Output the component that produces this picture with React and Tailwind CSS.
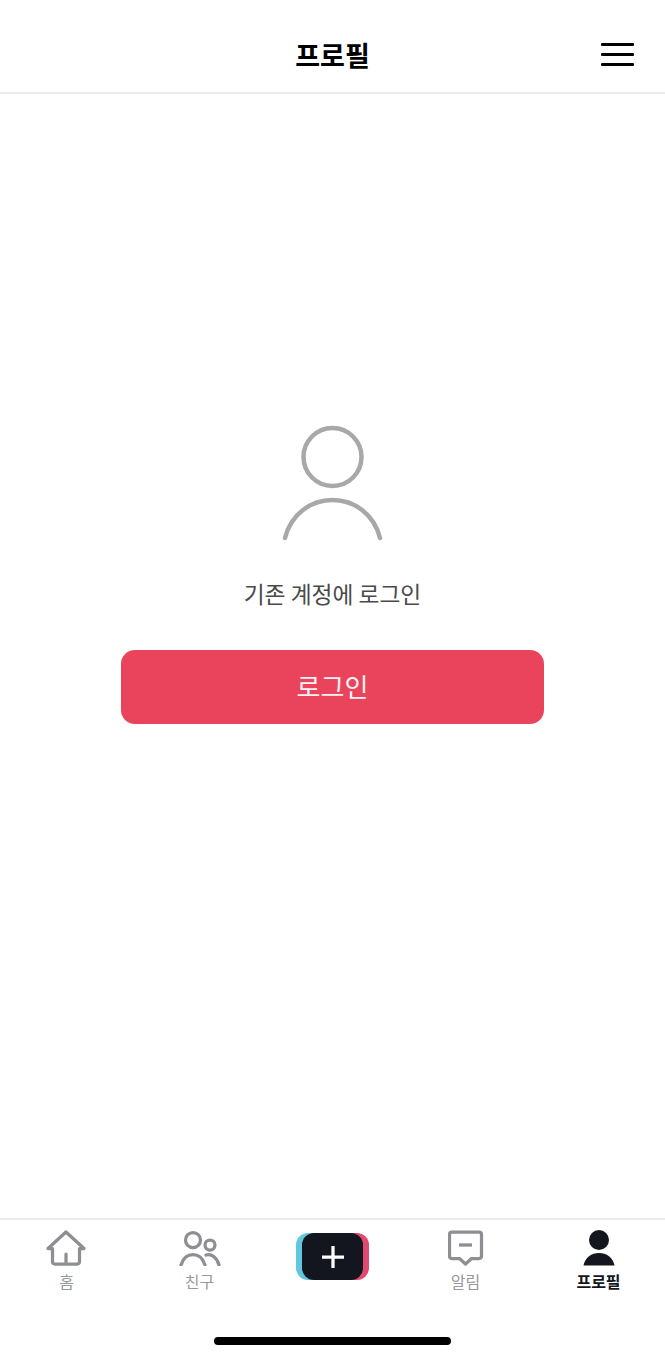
const navItems = [
  { label: '홈', icon: HomeIcon },
  { label: '친구', icon: FriendsIcon },
  { label: null },
  { label: '알림', icon: AlertIcon },
  { label: '프로필', icon: ProfileIcon, active: true },
];

function HomeIcon() {
  return (
    <svg width="40" height="36" viewBox="0 0 40 36" fill="none" stroke="#8e8e93" strokeWidth="3.25" strokeLinejoin="round" strokeLinecap="round" className="-ml-[2px]">
      <path d="M2 18.5 L20 2 L38 18.5 H33.5 V31.5 Q33.5 34 31 34 H9 Q6.5 34 6.5 31.5 V18.5 Z" />
      <path d="M20 24 V33" />
    </svg>
  );
}

function FriendsIcon() {
  return (
    <svg width="42" height="36" viewBox="0 0 42 36" fill="none" stroke="#8e8e93" strokeWidth="3.25" strokeLinecap="round">
      <circle cx="14" cy="10" r="7.5" />
      <circle cx="31" cy="15" r="5" />
      <path d="M2 35 C4 28 9 24.5 14 24.5 C19 24.5 24 28 26 35" />
      <path d="M27 25 C33 23.5 38 28 40 35" />
    </svg>
  );
}

function AlertIcon() {
  return (
    <svg width="36" height="36" viewBox="0 0 36 36" fill="none" stroke="#8e8e93" strokeWidth="3.25" strokeLinejoin="round">
      <path d="M4 2 H31 Q33.5 2 33.5 4.5 V26 Q33.5 28.5 31 28.5 H23.5 L17.5 34 L11.5 28.5 H4 Q1.5 28.5 1.5 26 V4.5 Q1.5 2 4 2 Z" />
      <path d="M11 15 H24" />
    </svg>
  );
}

function ProfileIcon() {
  return (
    <svg width="32" height="36" viewBox="0 0 32 36" fill="#14161f">
      <circle cx="16" cy="10" r="10" />
      <path d="M0.5 35.5 C2 27.5 8.5 23 16 23 C23.5 23 30 27.5 31.5 35.5 Z" />
    </svg>
  );
}

export default function App() {
  return (
    <div className="h-[1358px] flex flex-col bg-white font-['Noto_Sans_CJK_KR','Noto_Sans',sans-serif]">
      {/* Header */}
      <header className="h-[94px] shrink-0 flex items-center justify-between border-b-2 border-[#ececec] px-[31px] pt-[17px]">
        <div className="w-[33px]" />
        <h1 className="text-[27px] font-bold leading-none text-black">프로필</h1>
        <button className="w-[33px] flex flex-col gap-[6.5px]">
          <span className="block h-[3.5px] rounded-[1px] bg-black" />
          <span className="block h-[3.5px] rounded-[1px] bg-black" />
          <span className="block h-[3.5px] rounded-[1px] bg-black" />
        </button>
      </header>

      {/* Logged out state */}
      <main className="flex-1 flex flex-col items-center pt-[331px]">
        <svg width="102" height="116" viewBox="0 0 102 116" fill="none" stroke="#a8a8a8" strokeWidth="4.5" strokeLinecap="round">
          <circle cx="50.5" cy="32" r="29" />
          <path d="M3 113 C9 89 29 75 50.5 75 C72 75 92 89 98 113" />
        </svg>
        <p className="mt-[36px] text-[22.75px] leading-[34px] text-[#4a4a4a]">기존 계정에 로그인</p>
        <button className="mt-[39px] w-[423px] h-[74px] rounded-[14px] bg-[#e9445b] pb-[3px] text-[26px] text-[#fdf2f4]">
          로그인
        </button>
      </main>

      {/* Tab bar */}
      <nav className="h-[140px] shrink-0 border-t-2 border-[#ececec] bg-white flex flex-col">
        <div className="grid grid-cols-5 pt-[10px]">
          {navItems.map(({ label, icon: Icon, active }, i) =>
            label ? (
              <div key={label} className="flex flex-col items-center">
                <div className="h-[36px] flex items-center justify-center">
                  <Icon />
                </div>
                <span className={`mt-[4px] text-[16px] leading-[22px] ${active ? 'font-bold text-[#14161f]' : 'text-[#98989d]'}`}>
                  {label}
                </span>
              </div>
            ) : (
              <div key={i} className="flex justify-center pt-[3px]">
                <div className="relative w-[73px] h-[47px]">
                  <div className="absolute left-0 top-0 w-[50px] h-[47px] rounded-[12px] bg-[#5fc8dc]" />
                  <div className="absolute right-0 top-0 w-[50px] h-[47px] rounded-[12px] bg-[#df4a70]" />
                  <div className="absolute left-[6px] top-0 w-[61px] h-[47px] rounded-[12px] bg-[#14161f] flex items-center justify-center">
                    <svg width="24" height="24" viewBox="0 0 24 24" stroke="#fff" strokeWidth="3.25">
                      <path d="M12 1 V23 M1 12 H23" />
                    </svg>
                  </div>
                </div>
              </div>
            )
          )}
        </div>
        <div className="mt-auto mb-[13px] mx-auto w-[237px] h-[8px] rounded-full bg-black" />
      </nav>
    </div>
  );
}
